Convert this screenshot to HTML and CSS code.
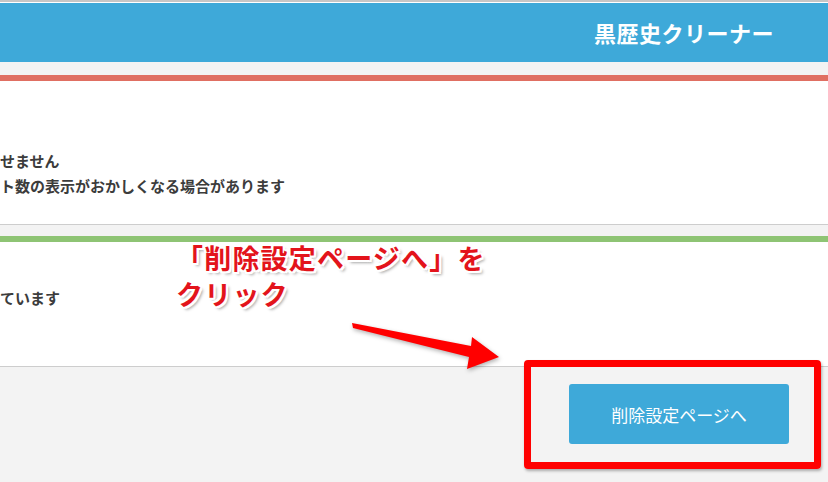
FILE: index.html
```html
<!DOCTYPE html>
<html lang="ja">

<head>
	<meta charset="utf-8">
	<meta name="viewport" content="width=device-width, initial-scale=1">
	<title>黒歴史クリーナー</title>
	<link rel="stylesheet" href="styles.css">
</head>

<body>

	<header class="site-header">
		<h1 class="site-title">黒歴史クリーナー</h1>
	</header>

	<main class="content">

		<section class="panel panel-red">
			<p>せません</p>
			<p>ト数の表示がおかしくなる場合があります</p>
		</section>

		<section class="panel panel-green">
			<p>ています</p>
		</section>

		<div class="actions">
			<a class="btn" href="#">削除設定ページへ</a>
		</div>

	</main>

	<!-- annotation layer -->
	<div class="note">「削除設定ページへ」を<br>クリック</div>

	<svg class="arrow" width="828" height="482" viewBox="0 0 828 482">
		<polygon points="352,323 471,346 472,337 499,357 467,369 469,357 353,328" fill="#f00" />
	</svg>

	<div class="highlight"></div>

</body>
</html>
```

FILE: styles.css
```css
body {
	font-family: "Noto Sans CJK JP", "Noto Sans", sans-serif;
	margin: 0;
	background: #f3f3f3;
	color: #3c3c3c;
	position: relative;
	height: 482px;
	overflow: hidden;
}

.site-header {
	border-top: 2px solid #c6c6c6;
	box-shadow: inset 0 1px 0 #fff;
	background: #3ea9d9;
	height: 60px;
	display: flex;
	align-items: center;
	justify-content: flex-end;
	padding-right: 54px;
}

.site-title {
	margin: 0;
	color: #fff;
	font-size: 22px;
	font-weight: bold;
	letter-spacing: 0.5px;
	line-height: 1;
}

.content {
	padding-top: 13px;
}

.panel {
	background: #fff;
	border-bottom: 1px solid #cdcdcd;
	box-sizing: border-box;
}

.panel p {
	margin: 0;
	font-size: 15px;
	font-weight: bold;
	line-height: 25px;
	white-space: nowrap;
}

.panel-red {
	border-top: 6px solid #e06f62;
	height: 150px;
	padding-top: 67px;
	margin-bottom: 11px;
}

.panel-green {
	border-top: 6px solid #8ec474;
	height: 131px;
	padding-top: 43px;
}

.actions {
	display: flex;
	justify-content: flex-end;
	padding: 17px 39px 0 0;
}

.btn {
	display: flex;
	align-items: center;
	justify-content: center;
	width: 220px;
	height: 60px;
	background: #3ea9d9;
	border-radius: 3px;
	color: #fff;
	font-size: 17px;
	text-decoration: none;
}

.note {
	position: absolute;
	left: 176px;
	top: 240px;
	font-size: 27px;
	font-weight: bold;
	line-height: 36px;
	letter-spacing: 1.2px;
	color: #e3141b;
	text-shadow:
		-2px 0 0 #fff, 2px 0 0 #fff, 0 -2px 0 #fff, 0 2px 0 #fff,
		-2px -2px 0 #fff, 2px -2px 0 #fff, -2px 2px 0 #fff, 2px 2px 0 #fff,
		3px 3px 3px rgba(0, 0, 0, 0.35);
}

.arrow {
	position: absolute;
	left: 0;
	top: 0;
	filter: drop-shadow(1px 2px 2px rgba(0, 0, 0, 0.3));
}

.highlight {
	position: absolute;
	left: 524px;
	top: 360px;
	width: 297px;
	height: 109px;
	box-sizing: border-box;
	border: 7px solid #f00;
	border-radius: 4px;
	box-shadow: 1px 2px 3px rgba(0, 0, 0, 0.3);
}
```
